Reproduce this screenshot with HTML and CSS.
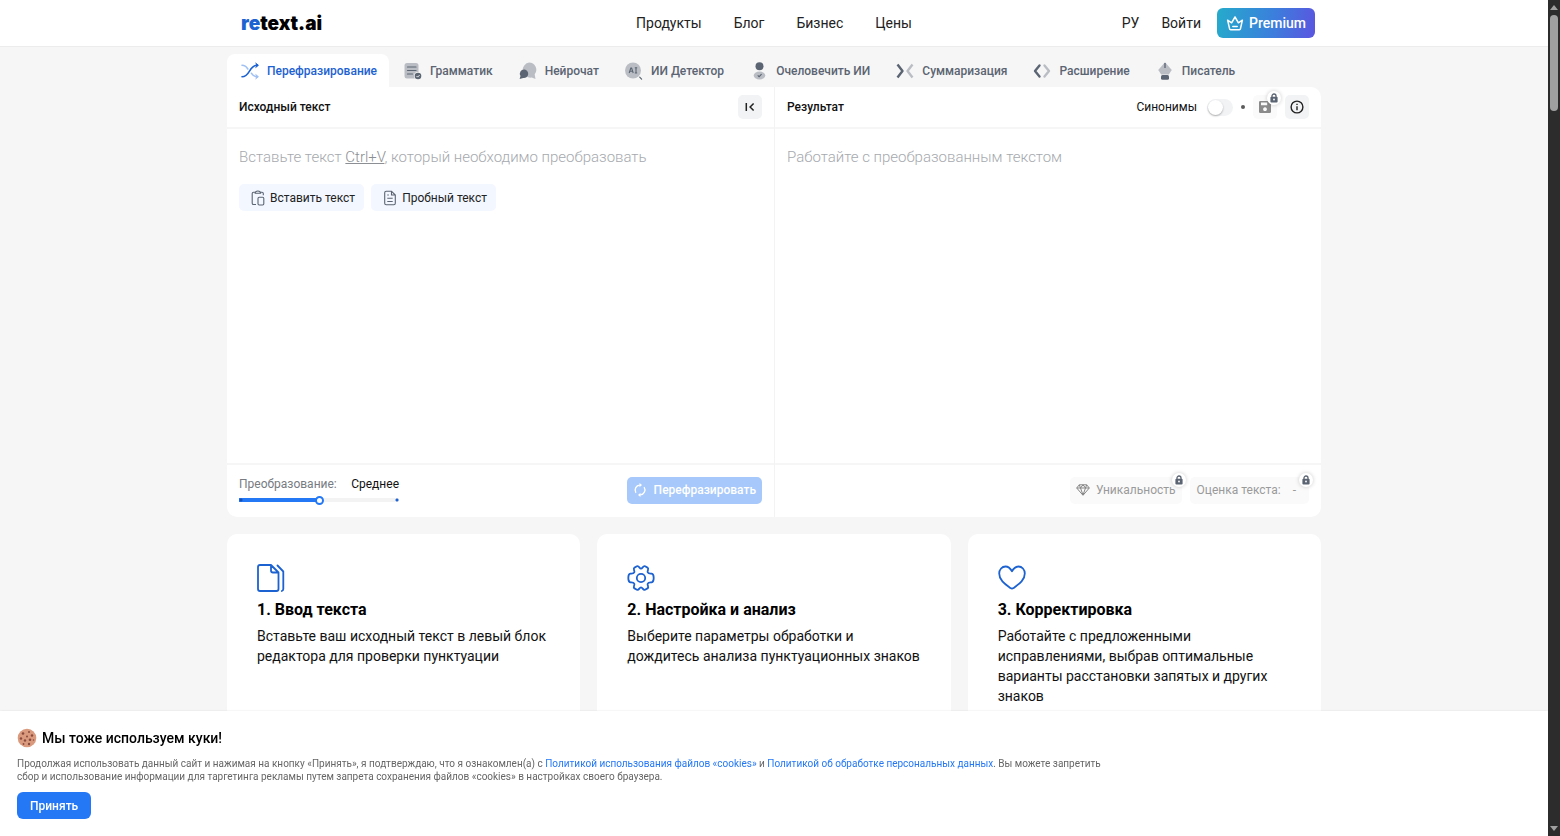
FILE: index.html
```html
<!DOCTYPE html>
<html lang="ru">
<head>
<meta charset="utf-8">
<title>retext.ai</title>
<link rel="stylesheet" href="styles.css">
</head>
<body>
<svg class="sprite" aria-hidden="true">
  <symbol id="lock" viewBox="0 0 8 10"><path d="M2 4V3a2 2 0 0 1 4 0v1" fill="none" stroke="#5b6472" stroke-width="1.3"/><rect x="0.4" y="3.8" width="7.2" height="5.6" rx="1" fill="#5b6472"/><circle cx="4" cy="6.5" r="0.9" fill="#fff"/></symbol>
</svg>
<div class="page">
  <header class="header">
    <div class="header-inner container">
      <a class="logo" href="#"><span class="logo-accent">re</span>text.ai</a>
      <nav class="nav">
        <a href="#">Продукты</a>
        <a href="#">Блог</a>
        <a href="#">Бизнес</a>
        <a href="#">Цены</a>
      </nav>
      <div class="account">
        <a href="#">РУ</a>
        <a href="#">Войти</a>
        <button class="premium" type="button">
          <svg width="18" height="16" viewBox="0 0 18 16" fill="none" stroke="#fff" stroke-width="1.5" stroke-linejoin="round" stroke-linecap="round"><path d="M3.6 13.8 1.6 5.2l4 2.6L9 2l3.4 5.8 4-2.6-2 8.6q-.2.9-1 .9H4.600q-.8 0-1-.9z"/><path d="M6.800 11.500h4.400"/></svg>
          Premium
        </button>
      </div>
    </div>
  </header>

  <main class="container">
    <nav class="tabs">
      <a class="tab tab-active" href="#">
        <svg width="18" height="18" viewBox="0 0 18 18" fill="none" stroke-width="1.6" stroke-linecap="round"><path d="M1 3.300c3.200 0 4.500 1.600 5.800 3.700M10.500 11.300c1.300 2.100 2.800 3.400 5.800 3.400" stroke="#9fc0f3"/><path d="m14.800 12.600 2.600 2.100-2.600 2.100" fill="#9fc0f3" stroke="#9fc0f3" stroke-width="1"/><path d="M1 14.700C9.500 14.700 7.500 3.300 16.300 3.300" stroke="#1d62d1"/><path d="m14.800 1.200 2.600 2.100-2.600 2.100" fill="#1d62d1" stroke="#1d62d1" stroke-width="1"/></svg>
        Перефразирование
      </a>
      <a class="tab" href="#">
        <svg width="18" height="18" viewBox="0 0 18 18"><rect x="0.500" y="1" width="14" height="15.500" rx="2.500" fill="#babec4"/><path d="M3.500 5h8.500M3.500 8.500h8.500M3.500 12h5" stroke="#5b6472" stroke-width="1.200" stroke-linecap="round"/><circle cx="14" cy="14" r="4" fill="#f6f6f6"/><circle cx="14" cy="14" r="3.300" fill="#5b6472"/><path d="m12.500 14 1.100 1.100 2-2" fill="none" stroke="#fff" stroke-width="0.900"/></svg>
        Грамматик
      </a>
      <a class="tab" href="#">
        <svg width="18" height="18" viewBox="0 0 18 18"><path d="M10 .5a7.300 7.300 0 0 1 5.700 11.800l.8 4.700-3.800-1.400A7.400 7.400 0 1 1 10 .5z" fill="#babec4"/><path d="M5.500 7.500a4.300 4.300 0 1 1-1.300 8.500L.6 17l.9-2.900A4.300 4.300 0 0 1 5.500 7.500z" fill="#5b6472"/></svg>
        Нейрочат
      </a>
      <a class="tab" href="#">
        <svg width="18" height="18" viewBox="0 0 18 18"><circle cx="8" cy="8.500" r="8" fill="#babec4"/><path d="m4.200 11 1.600-5h.8l1.600 5M4.900 9.300h2.700M11 5.800v5.200M9.800 5.800h2.400M9.800 11h2.400" fill="none" stroke="#5b6472" stroke-width="1.100"/><path d="m14.700 15.200 1.900 1.900" stroke="#5b6472" stroke-width="1.200" stroke-linecap="round"/></svg>
        ИИ Детектор
      </a>
      <a class="tab" href="#">
        <svg width="18" height="18" viewBox="0 0 18 18"><circle cx="9.500" cy="4.300" r="4" fill="#5b6472"/><ellipse cx="9.500" cy="13.500" rx="5.800" ry="4" fill="#babec4"/><path d="m7.700 13.400 1.400 1.300 2.500-2.500" fill="none" stroke="#5b6472" stroke-width="1.100"/></svg>
        Очеловечить ИИ
      </a>
      <a class="tab" href="#">
        <svg width="18" height="18" viewBox="0 0 18 18" fill="none" stroke-width="2.400" stroke-linejoin="round"><path d="M1.500 2.500 6.500 9l-5 6.500" stroke="#5b6472"/><path d="M16.500 2.500l-5 6.500 5 6.500" stroke="#babec4"/></svg>
        Суммаризация
      </a>
      <a class="tab" href="#">
        <svg width="18" height="18" viewBox="0 0 18 18" fill="none" stroke-width="2.400" stroke-linecap="round" stroke-linejoin="round"><path d="M6.500 3.500 2 9l4.500 5.500" stroke="#5b6472"/><path d="M11.500 3.500 16 9l-4.500 5.500" stroke="#babec4"/></svg>
        Расширение
      </a>
      <a class="tab" href="#">
        <svg width="18" height="18" viewBox="0 0 18 18"><path d="M9 .3 15.800 8 12.800 12.500H5.200L2.200 8z" fill="#babec4"/><path d="M9 1v5" stroke="#5b6472" stroke-width="1.300"/><rect x="5" y="13" width="8" height="4.800" rx="1.500" fill="#5b6472"/></svg>
        Писатель
      </a>
    </nav>

    <section class="editor">
      <div class="pane">
        <div class="pane-head">
          <label class="pane-title" for="source">Исходный текст</label>
          <button class="icon-button" type="button" aria-label="Свернуть">
            <svg width="10" height="10" viewBox="0 0 10 10" fill="none" stroke="#222" stroke-width="1.500"><path d="M1.300 1v8M8.600 1.500 5.100 5l3.500 3.500"/></svg>
          </button>
        </div>
        <div class="pane-body">
          <textarea id="source" class="field"></textarea>
          <div class="prompt">
            <p class="hint">Вставьте текст <u>Ctrl+V</u>, который необходимо преобразовать</p>
            <div class="prompt-actions">
              <button class="soft-button" type="button">
                <svg width="14" height="16" viewBox="0 0 14 16" fill="none" stroke="#5b6472" stroke-width="1.100"><path d="M4 2.200H2.500Q1.200 2.200 1.200 3.500v9.700q0 1.300 1.300 1.300H5M10 2.200h1q1.300 0 1.300 1.300v1.800"/><path d="M4.200 3.300q0-2.300 2.700-2.300t2.700 2.300z"/><rect x="7" y="7.300" width="5.800" height="7.700" rx="1.200"/></svg>
                Вставить текст
              </button>
              <button class="soft-button" type="button">
                <svg width="14" height="16" viewBox="0 0 14 16" fill="none" stroke="#5b6472" stroke-width="1.100"><path d="M8.500 1.200H3.200Q1.700 1.200 1.700 2.700v10.600q0 1.500 1.500 1.500h7.600q1.500 0 1.500-1.500V5zM8.500 1.200V5h3.800M4.300 5h1.500M4.300 8.300h5.400M4.300 11.500h5.400"/></svg>
                Пробный текст
              </button>
            </div>
          </div>
        </div>
        <div class="pane-foot">
          <div class="strength">
            <div class="strength-text"><label for="strength">Преобразование:</label><output for="strength">Среднее</output></div>
            <input id="strength" class="slider" type="range" min="0" max="2" value="1">
          </div>
          <button class="run-button" type="button" disabled>
            <svg width="14" height="14" viewBox="0 0 14 14" fill="none" stroke="#fff" stroke-width="1.300"><path d="M2.900 9.800A5 5 0 0 1 6.800 2.100M11.100 4.200A5 5 0 0 1 7.200 11.900"/><path d="M6.500 0 9 2.100 6.500 4.200zM7.500 9.800 5 11.900 7.500 14z" fill="#fff" stroke="none"/></svg>
            Перефразировать
          </button>
        </div>
      </div>

      <div class="pane">
        <div class="pane-head">
          <label class="pane-title" for="result">Результат</label>
          <div class="tools">
            <label class="synonyms">Синонимы <input class="toggle" type="checkbox"></label>
            <span class="dot"></span>
            <button class="icon-button locked" type="button" aria-label="Сохранить" disabled>
              <svg width="12" height="12" viewBox="0 0 12 12" fill="#8b8b8b"><path fill-rule="evenodd" d="M1.300 0H9l3 3v7.700q0 1.300-1.300 1.300H1.300Q0 12 0 10.700V1.300Q0 0 1.300 0zM2 1.500v2.700h6.200V1.500zM6 6.300a1.900 1.900 0 1 0 .01 0z"/></svg>
              <span class="badge"><svg width="8" height="10"><use href="#lock"/></svg></span>
            </button>
            <button class="icon-button" type="button" aria-label="Информация">
              <svg width="14" height="14" viewBox="0 0 14 14" fill="none" stroke="#222" stroke-width="1.400"><circle cx="7" cy="7" r="5.900"/><path d="M7 6.300v4M7 3.700v1.400"/></svg>
            </button>
          </div>
        </div>
        <div class="pane-body">
          <textarea id="result" class="field" placeholder="Работайте с преобразованным текстом"></textarea>
        </div>
        <div class="pane-foot pane-foot-end">
          <button class="metric locked" type="button" disabled>
            <svg width="14" height="12" viewBox="0 0 14 12" fill="none" stroke="#858585" stroke-width="1"><path d="M3.300.8h7.400L13.300 4 7 11.300.7 4zM.7 4h12.600M4.500 4 7 11l2.500-7M3.300.8 4.500 4 7 .8 9.500 4 10.700.8"/></svg>
            Уникальность
            <span class="badge"><svg width="8" height="10"><use href="#lock"/></svg></span>
          </button>
          <button class="metric metric-score locked" type="button" disabled>
            <span>Оценка текста:</span><span>-</span>
            <span class="badge"><svg width="8" height="10"><use href="#lock"/></svg></span>
          </button>
        </div>
      </div>
    </section>

    <section class="cards">
      <article class="card">
        <svg width="28" height="28" viewBox="0 0 28 28" fill="none" stroke="#1d62d1" stroke-width="1.800" stroke-linejoin="round" stroke-linecap="round"><path d="M14 1H3Q1 1 1 3v22q0 2 2 2h16.500q2 0 2-2V8.500zM14 1v5.500q0 2 2 2h5.500M20.500 1.500 26.300 7.500V25q0 1.500-1.500 2"/></svg>
        <h2>1. Ввод текста</h2>
        <p>Вставьте ваш исходный текст в левый блок редактора для проверки пунктуации</p>
      </article>
      <article class="card">
        <svg width="28" height="28" viewBox="0 0 28 28" fill="none" stroke="#1d62d1" stroke-width="1.800" stroke-linejoin="round"><circle cx="14" cy="14" r="4.200"/><path d="M9.900 2.300C12 1.300 12.300 4.600 14 4.600S16 1.300 18.100 2.300l2.400 1.300c2 1.300-.6 3.300.2 4.700.8 1.500 2.500 1.200 4 1.400 1.600.3 2 1.500 2 4.300s-.4 4-2 4.300c-1.500.2-3.200-.1-4 1.400-.8 1.400 1.800 3.400-.2 4.700l-2.400 1.300c-2.100 1-2.400-2.300-4.100-2.300s-2 3.300-4.100 2.300l-2.400-1.300c-2-1.300.6-3.300-.2-4.700-.8-1.500-2.500-1.200-4-1.400-1.600-.3-2-1.500-2-4.300s.4-4 2-4.300c1.500-.2 3.200.1 4-1.400.8-1.400-1.800-3.400.2-4.700z"/></svg>
        <h2>2. Настройка и анализ</h2>
        <p>Выберите параметры обработки и дождитесь анализа пунктуационных знаков</p>
      </article>
      <article class="card">
        <svg width="28" height="28" viewBox="0 0 28 28" fill="none" stroke="#1d62d1" stroke-width="1.800" stroke-linejoin="round"><path d="M14 7.200C12 3.800 10 2.500 7.500 2.500 4 2.500 1.200 5.500 1.200 9.500c0 7 6.500 11 11.300 14.600q1.500 1 3 0C20.300 20.500 26.800 16.500 26.800 9.500c0-4-2.800-7-6.300-7-2.500 0-4.500 1.300-6.500 4.700z"/></svg>
        <h2>3. Корректировка</h2>
        <p>Работайте с предложенными исправлениями, выбрав оптимальные варианты расстановки запятых и других знаков</p>
      </article>
    </section>
  </main>
</div>

<section class="cookie">
  <h2 class="cookie-title">
    <svg width="20" height="20" viewBox="0 0 20 20"><circle cx="10" cy="10" r="9.300" fill="#d99a7e"/><g fill="#8a4a3c"><circle cx="6" cy="5.500" r="1.300"/><circle cx="12" cy="4" r="1"/><circle cx="15" cy="7.500" r="1.200"/><circle cx="10" cy="8.500" r="1"/><circle cx="4" cy="10.500" r="1.200"/><circle cx="8" cy="12.500" r="1.200"/><circle cx="13" cy="11.800" r="1.300"/><circle cx="16.500" cy="12" r="0.800"/><circle cx="12" cy="16" r="1.200"/><circle cx="6.500" cy="16" r="0.900"/></g></svg>
    Мы тоже используем куки!
  </h2>
  <p class="cookie-text">Продолжая использовать данный сайт и нажимая на кнопку «Принять», я подтверждаю, что я ознакомлен(а) с <a href="#">Политикой использования файлов «cookies»</a> и <a href="#">Политикой об обработке персональных данных</a>. Вы можете запретить сбор и использование информации для таргетинга рекламы путем запрета сохранения файлов «cookies» в настройках своего браузера.</p>
  <button class="accept" type="button">Принять</button>
</section>

<div class="scrollbar" aria-hidden="true">
  <svg width="8" height="5" viewBox="0 0 8 5"><path d="M4 0 8 5H0z" fill="#a0a0a0"/></svg>
  <div class="scroll-track"><div class="scroll-thumb"></div></div>
  <svg width="8" height="5" viewBox="0 0 8 5"><path d="M0 0h8L4 5z" fill="#a0a0a0"/></svg>
</div>
</body>
</html>
```
FILE: styles.css
```css
* { box-sizing: border-box; }

body {
  margin: 0;
  height: 100vh;
  overflow: hidden;
  background: #f6f6f6;
  color: #111;
  font-family: Roboto, "Liberation Sans", sans-serif;
  font-size: 12px;
}

a { color: inherit; text-decoration: none; }
h2, p { margin: 0; }
button, input, textarea { font: inherit; color: inherit; }
button {
  display: inline-flex;
  align-items: center;
  border: 0;
  padding: 0;
  cursor: pointer;
}
svg { flex: none; display: block; }
.sprite { position: absolute; width: 0; height: 0; }

.page { margin-right: 12px; }
.container { width: 100%; max-width: 1094px; margin: 0 auto; }

.header { background: #fff; border-bottom: 1px solid #ececec; }
.header-inner {
  display: grid;
  grid-template-columns: 1fr auto 1fr;
  align-items: center;
  height: 46px;
  padding: 0 6px;
}
.logo { margin-left: 8px; font: 900 19px Inter, sans-serif; color: #000; }
.logo-accent { color: #1d62d1; }
.nav { display: flex; gap: 32px; font-size: 14px; color: #222; }
.account {
  display: flex;
  justify-content: flex-end;
  align-items: center;
  gap: 22px;
  font-size: 14px;
  color: #222;
}
.premium {
  gap: 5px;
  height: 30px;
  margin-left: -6px;
  padding: 0 9px;
  border-radius: 6px;
  background: linear-gradient(100deg, #25abcb, #3a80dc 55%, #5b55e0);
  color: #fff;
  font-size: 14px;
  font-weight: 500;
}

.tabs { display: flex; padding-top: 7px; }
.tab {
  display: flex;
  align-items: center;
  gap: 8px;
  height: 33px;
  padding: 0 13px;
  border-radius: 8px 8px 0 0;
  color: #5b6472;
  font-weight: 500;
}
.tab-active { margin-right: 2px; padding: 0 12px 0 14px; background: #fff; color: #1d62d1; }

.editor {
  display: grid;
  grid-template-columns: 1fr 1fr;
  border-radius: 0 10px 10px 10px;
  background: #fff;
}
.pane + .pane { border-left: 1px solid #f3f3f3; }
.pane-head {
  display: flex;
  justify-content: space-between;
  align-items: center;
  height: 42px;
  padding: 0 12px;
  border-bottom: 2px solid #f6f6f6;
}
.pane-title { font-weight: 500; }
.pane-body { display: grid; min-height: 334px; }
.field {
  grid-area: 1 / 1;
  width: 100%;
  border: 0;
  outline: 0;
  padding: 18px 12px;
  background: none;
  resize: none;
  font-size: 15px;
  font-weight: 300;
  line-height: 20px;
}
.field::placeholder { color: #a6a9ae; }
.prompt { grid-area: 1 / 1; padding: 18px 12px; }
.hint { color: #a6a9ae; font-size: 15px; font-weight: 300; line-height: 20px; }
.hint u { color: #8c8f94; }
.prompt-actions { display: flex; gap: 7px; margin-top: 17px; }
.soft-button {
  gap: 5px;
  height: 27px;
  padding: 0 9px 0 12px;
  border-radius: 5px;
  background: #f3f7ff;
  color: #222;
}
.icon-button {
  position: relative;
  justify-content: center;
  width: 24px;
  height: 24px;
  border-radius: 5px;
  background: #f2f3f5;
}
.icon-button.locked { background: #fafafa; }

.tools { display: flex; align-items: center; gap: 8px; }
.synonyms { display: flex; align-items: center; gap: 10px; }
.toggle {
  appearance: none;
  width: 26px;
  height: 17px;
  margin: 0;
  border-radius: 9px;
  background: #f2f3f5;
}
.toggle::before {
  content: "";
  display: block;
  width: 15px;
  height: 15px;
  margin: 1px;
  border-radius: 50%;
  background: #fff;
  box-shadow: 0 1px 2px rgba(0, 0, 0, 0.3);
}
.dot { width: 4px; height: 4px; border-radius: 50%; background: #5b5b5b; }
.badge {
  position: absolute;
  top: -4px;
  right: -4px;
  display: grid;
  place-items: center;
  width: 14px;
  height: 14px;
  border-radius: 50%;
  background: #fff;
  box-shadow: 0 0 4px rgba(0, 0, 0, 0.2);
}

.pane-foot {
  display: flex;
  justify-content: space-between;
  align-items: center;
  height: 54px;
  padding: 0 12px 2px;
  border-top: 2px solid #f6f6f6;
}
.pane-foot-end { justify-content: flex-end; gap: 8px; }
.strength { width: 160px; }
.strength-text { display: flex; justify-content: space-between; line-height: 16px; color: #111; }
.strength-text label { color: #777b82; }
.slider {
  appearance: none;
  display: block;
  width: 100%;
  height: 8px;
  margin: 4px 0 0;
  background:
    radial-gradient(circle at 2px 4px, #1450b8 1px, transparent 2px),
    radial-gradient(circle at calc(100% - 2px) 4px, #1d62d1 1px, transparent 2px),
    linear-gradient(90deg, #2478f5 50%, #f3f3f3 50%) center / 100% 4px no-repeat;
}
.slider::-webkit-slider-thumb {
  appearance: none;
  width: 9px;
  height: 9px;
  border: 2px solid #2478f5;
  border-radius: 50%;
  background: #fff;
}
.run-button {
  gap: 7px;
  height: 27px;
  padding: 0 6px;
  border-radius: 5px;
  background: #a6c8fb;
  color: #fff;
  font-weight: 500;
}
.metric {
  position: relative;
  gap: 6px;
  height: 27px;
  padding: 0 6px;
  border-radius: 5px;
  background: #fafafa;
  color: #9a9a9a;
}
.metric-score { gap: 12px; padding: 0 13px 0 7px; }

.cards { display: grid; grid-template-columns: repeat(3, 1fr); gap: 17px; margin-top: 17px; }
.card { min-height: 200px; padding: 30px 24px 30px 30px; border-radius: 10px; background: #fff; }
.card h2 { margin-top: 6px; font-size: 16px; line-height: 24px; font-weight: 700; color: #000; }
.card p { margin-top: 4px; font-size: 14px; line-height: 20px; }

.cookie {
  position: fixed;
  left: 0;
  right: 12px;
  bottom: 0;
  padding: 17px;
  background: #fff;
  box-shadow: 0 0 2px rgba(0, 0, 0, 0.1);
}
.cookie-title {
  display: flex;
  align-items: center;
  gap: 5px;
  font-size: 14px;
  line-height: 20px;
  font-weight: 500;
  color: #000;
}
.cookie-text { max-width: 1100px; margin-top: 9px; color: #666; font-size: 10px; line-height: 13px; }
.cookie-text a { color: #2478f5; }
.accept {
  height: 27px;
  margin-top: 9px;
  padding: 0 13px;
  border-radius: 6px;
  background: #2478f5;
  color: #fff;
  font-weight: 500;
}

.scrollbar {
  position: fixed;
  top: 0;
  right: 0;
  bottom: 0;
  display: flex;
  flex-direction: column;
  align-items: center;
  gap: 5px;
  width: 12px;
  padding: 5px 0;
  background: #2c2c2c;
}
.scroll-track { flex: 1; }
.scroll-thumb { width: 8px; height: 96px; border-radius: 4px; background: #a0a0a0; }
```
